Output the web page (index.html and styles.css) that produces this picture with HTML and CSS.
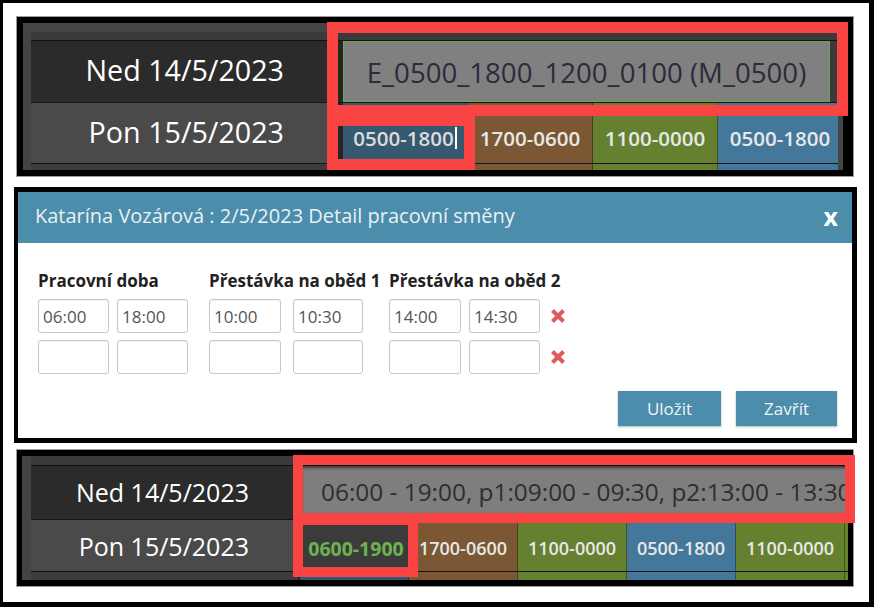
FILE: index.html
```html
<!DOCTYPE html>
<html>
<head>
    <meta charset="utf-8">
    <link rel="stylesheet" href="styles.css">
</head>
<body>
<div class="shot">

    <div class="grid-panel big">
        <div class="sheet">
            <div class="strip"></div>
            <div class="row row-a">
                <div class="day">Ned 14/5/2023</div>
                <div class="cells dark">
                    <div class="shift-edit">E_0500_1800_1200_0100 (M_0500)</div>
                </div>
            </div>
            <div class="row row-b">
                <div class="day">Pon 15/5/2023</div>
                <div class="cells">
                    <div class="cell current">0500-1800<span class="caret"></span></div>
                    <div class="cell brown">1700-0600</div>
                    <div class="cell green">1100-0000</div>
                    <div class="cell blue">0500-1800</div>
                </div>
            </div>
            <div class="row row-c">
                <div class="day"></div>
                <div class="cells">
                    <div class="cell blue"></div>
                    <div class="cell brown"></div>
                    <div class="cell green"></div>
                    <div class="cell blue"></div>
                </div>
            </div>
        </div>
        <div class="mark mark-wide"></div>
        <div class="mark mark-cell"></div>
    </div>

    <div class="dialog">
        <div class="dialog-head">
            <span class="dialog-title">Katarína Vozárová : 2/5/2023 Detail pracovní směny</span>
            <span class="dialog-close">x</span>
        </div>
        <div class="dialog-body">
            <div class="fields">
                <div class="group g1">
                    <label>Pracovní doba</label>
                    <input type="text" value="06:00">
                    <input type="text" value="18:00">
                    <input type="text" value="">
                    <input type="text" value="">
                </div>
                <div class="group g2">
                    <label>Přestávka na oběd 1</label>
                    <input type="text" value="10:00">
                    <input type="text" value="10:30">
                    <input type="text" value="">
                    <input type="text" value="">
                </div>
                <div class="group g3">
                    <label>Přestávka na oběd 2</label>
                    <input type="text" value="14:00">
                    <input type="text" value="14:30">
                    <span class="remove"><svg width="16" height="14" viewBox="0 0 16 14"><path d="M2.5 1.5 L13.5 12.5 M13.5 1.5 L2.5 12.5" stroke="#dd5b5b" stroke-width="4"/></svg></span>
                    <input type="text" value="">
                    <input type="text" value="">
                    <span class="remove"><svg width="16" height="14" viewBox="0 0 16 14"><path d="M2.5 1.5 L13.5 12.5 M13.5 1.5 L2.5 12.5" stroke="#dd5b5b" stroke-width="4"/></svg></span>
                </div>
            </div>
            <div class="actions">
                <button class="btn save">Uložit</button>
                <button class="btn close">Zavřít</button>
            </div>
        </div>
    </div>

    <div class="grid-panel small">
        <div class="sheet">
            <div class="strip"></div>
            <div class="row row-a">
                <div class="day">Ned 14/5/2023</div>
                <div class="cells dark">
                    <div class="shift-edit plain">06:00 - 19:00, p1:09:00 - 09:30, p2:13:00 - 13:30</div>
                </div>
            </div>
            <div class="row row-b">
                <div class="day">Pon 15/5/2023</div>
                <div class="cells">
                    <div class="cell picked">0600-1900</div>
                    <div class="cell brown">1700-0600</div>
                    <div class="cell green">1100-0000</div>
                    <div class="cell blue">0500-1800</div>
                    <div class="cell green">1100-0000</div>
                    <div class="cell green"></div>
                </div>
            </div>
            <div class="row row-c">
                <div class="day"></div>
                <div class="cells">
                    <div class="cell deep"></div>
                    <div class="cell brown"></div>
                    <div class="cell green"></div>
                    <div class="cell blue"></div>
                    <div class="cell green"></div>
                    <div class="cell green"></div>
                </div>
            </div>
        </div>
        <div class="mark mark-wide"></div>
        <div class="mark mark-cell"></div>
    </div>

</div>
</body>
</html>
```

FILE: styles.css
```css
body {
    margin: 0;
    font-family: "Open Sans", "Noto Sans", sans-serif;
}
.shot {
    width: 874px;
    height: 607px;
    box-sizing: border-box;
    border: solid #000;
    border-width: 3px 5px 5px 3px;
    background: #fff;
    overflow: hidden;
}

/* roster grid screenshots */
.grid-panel {
    position: relative;
    box-sizing: border-box;
    background: #444;
    border: solid #000;
    box-shadow: 0 0 0 1px #9c9c9c;
}
.big {
    margin: 14px 0 0 14px;
    width: 836px;
    height: 159px;
    border-width: 6px 10px 6px 6px;
    padding: 9px 5px 0 8px;
}
.small {
    margin: 7px 0 0 14px;
    width: 836px;
    height: 136px;
    border-width: 6px 5px 6px 5px;
    padding: 0 0 0 9px;
}
.sheet {
    height: 100%;
    overflow: hidden;
    background: #3a3a3a;
}
.strip {
    height: 8px;
    border-bottom: 1px solid #111;
}
.small .strip { height: 9px; }
.row {
    display: flex;
    border-bottom: 1px solid #161616;
}
.big .row-a { height: 61px; }
.big .row-b { height: 60px; }
.small .row-a { height: 53px; }
.small .row-b { height: 51px; }
.row-c { height: 20px; }

.day {
    flex: none;
    box-sizing: border-box;
    display: flex;
    align-items: center;
    justify-content: flex-end;
    color: #fff;
    white-space: nowrap;
}
.row-a .day { background: #2b2b2b; }
.row-b .day { background: #4a4a4a; }
.row-c .day { background: #3c3c3c; }
.big .day {
    width: 312px;
    padding: 0 54px 4px 0;
    border-right: 5px solid #262626;
    font-size: 28.7px;
}
.small .day {
    width: 269px;
    padding: 0 49px 2px 0;
    border-right: 2px solid #262626;
    font-size: 25px;
}
.small .row-b .day { padding-bottom: 0; }

.cells {
    display: flex;
    flex: none;
}
.cells.dark { background: #2b2b2b; }
.cell {
    flex: none;
    box-sizing: border-box;
    border-right: 1px solid rgba(0, 0, 0, 0.35);
    display: flex;
    align-items: center;
    justify-content: center;
    color: #e8e8e8;
    font-weight: 600;
    white-space: nowrap;
}
.big .cell {
    width: 125px;
    padding-top: 10px;
    font-size: 20.5px;
}
.small .cell {
    width: 109px;
    padding-top: 5px;
    font-size: 18px;
}
.blue { background: #44789a; }
.brown { background: #7b5833; }
.green { background: #65812f; }
.current { background: #35596f; color: #dcdcdc; }
.deep { background: #2f5878; }
.small .picked {
    background: #3b3b3b;
    color: #6cb34f;
    font-weight: 700;
    font-size: 19.5px;
    padding-left: 4px;
}
.caret {
    display: inline-block;
    width: 2px;
    height: 22px;
    margin-left: 1px;
    background: #fff;
}

.shift-edit {
    box-sizing: border-box;
    width: 487px;
    height: 61px;
    border: 1px solid #6aa84f;
    background: #808080;
    color: #2b2b3b;
    font-size: 27.6px;
    display: flex;
    align-items: center;
    justify-content: center;
    white-space: nowrap;
}
.shift-edit.plain {
    width: 548px;
    height: 53px;
    border: none;
    background: #7e7e7e;
    box-shadow: inset 2px 2px 3px rgba(0, 0, 0, 0.55);
    justify-content: flex-start;
    padding: 0 0 2px 21px;
    color: #2e2e2e;
    font-size: 24.4px;
    overflow: hidden;
}

/* red highlight frames */
.mark {
    position: absolute;
    box-sizing: border-box;
    border: 11px solid #fa4343;
}
.big .mark-wide { left: 304px; top: -1px; width: 521px; height: 94px; }
.big .mark-cell { left: 304px; top: 92px; width: 148px; height: 55px; }
.small .mark { border-width: 10px; }
.small .mark-wide { left: 271px; top: -1px; width: 562px; height: 68px; }
.small .mark-cell { left: 271px; top: 59px; width: 125px; height: 62px; }

/* shift detail dialog */
.dialog {
    margin: 11px 0 0 11px;
    width: 843px;
    height: 256px;
    box-sizing: border-box;
    border: solid #000;
    border-width: 5px 5px 5px 4px;
    background: #fff;
}
.dialog-head {
    height: 51px;
    box-sizing: border-box;
    background: #4b8dab;
    display: flex;
    align-items: center;
    justify-content: space-between;
    padding: 0 14px 4px 17px;
}
.dialog-title {
    color: #e9f1f5;
    font-size: 20px;
}
.dialog-close {
    color: #fff;
    font-size: 25px;
    font-weight: 700;
}
.dialog-body {
    padding: 26px 15px 0 20px;
}
.fields {
    display: flex;
}
.group {
    display: grid;
    row-gap: 7px;
    column-gap: 8px;
    grid-template-rows: 23px 34px 34px;
}
.group label {
    grid-column: 1 / -1;
    font-size: 17px;
    line-height: 23px;
    font-weight: 700;
    color: #222;
    white-space: nowrap;
}
.g1 { grid-template-columns: 71px 71px; margin-right: 21px; }
.g2 { grid-template-columns: 72px 70px; column-gap: 12px; margin-right: 26px; }
.g3 { grid-template-columns: 72px 71px 18px; }
.group input {
    box-sizing: border-box;
    width: 100%;
    height: 34px;
    margin: 0;
    padding: 0 0 0 4px;
    border: 1px solid #c8c8c8;
    border-radius: 3px;
    box-shadow: inset 0 1px 1px rgba(0, 0, 0, 0.06);
    font-family: "Open Sans", "Noto Sans", sans-serif;
    font-size: 17px;
    color: #555;
    background: #fff;
}
.remove {
    display: flex;
    align-items: center;
    padding-left: 2px;
}
.actions {
    display: flex;
    justify-content: flex-end;
    gap: 15px;
    margin-top: 17px;
}
.btn {
    height: 35px;
    border: none;
    background: #4b8dab;
    color: #eef5f8;
    font-family: "Open Sans", "Noto Sans", sans-serif;
    font-size: 17px;
    box-shadow: 0 1px 2px rgba(0, 0, 0, 0.3);
    padding: 0;
}
.save { width: 103px; }
.close { width: 101px; }
```
